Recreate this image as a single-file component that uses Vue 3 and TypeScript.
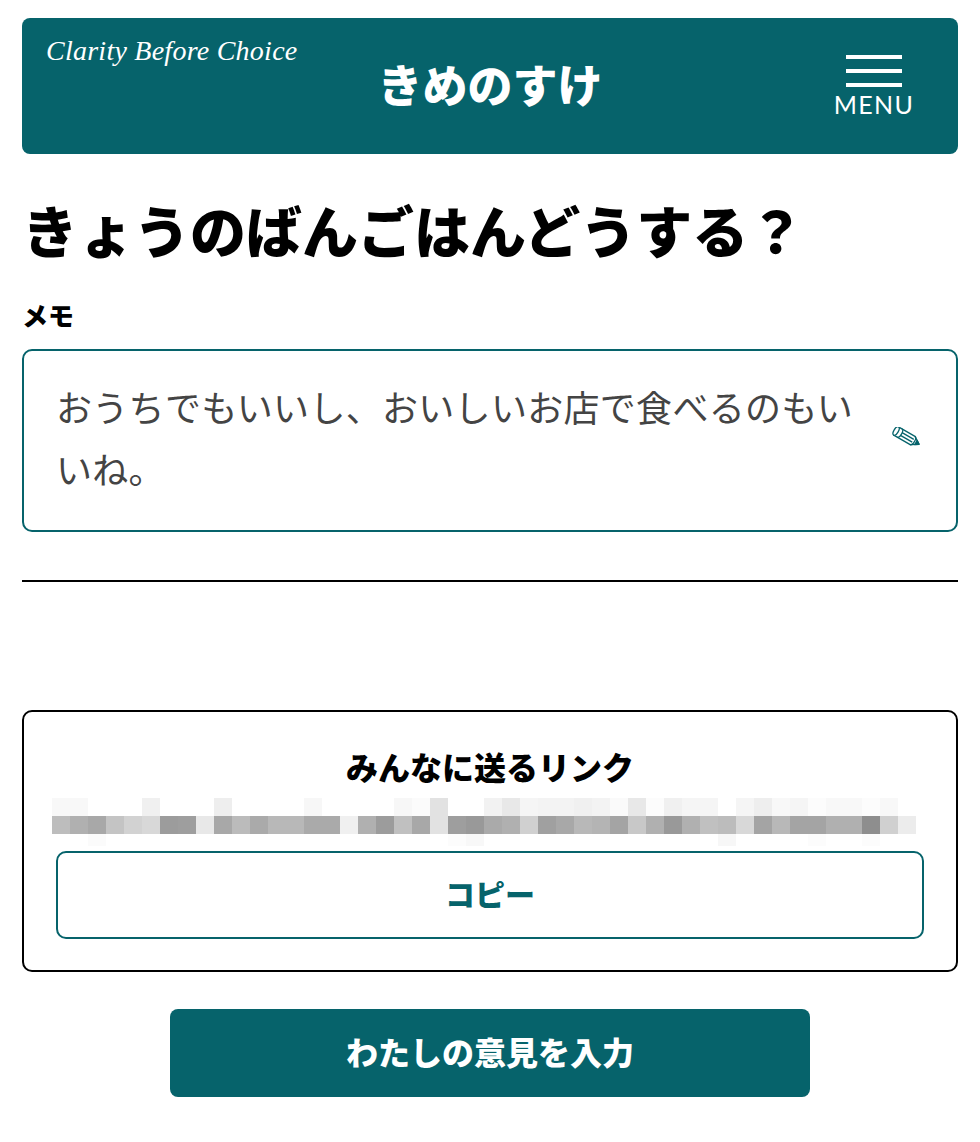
<script setup lang="ts">
const top = ['f8','f8','ff','ff','ff','f0','ff','ff','ff','ee','ff','ff','ff','ff','f7','ff','ff','ff','ff','f7','fb','e2','ff','ff','f2','e8','f5','f3','f3','f0','f3','fa','e8','fc','f0','f5','f5','ff','f5','ee','f8','f5','fc','f8','f8','fc','f8','ff']
const mid = ['bd','b0','a8','c4','d2','d8','9c','9e','e8','a8','bb','aa','b8','b8','aa','aa','f0','b0','9c','c0','a8','e2','9e','99','aa','b0','d0','a0','a8','b8','b4','a4','c8','b0','99','b0','c0','bc','d8','a4','b8','a4','a4','b0','b0','8e','d0','ec']
const low: Record<number, string> = { 2: 'fb', 22: 'fc', 23: 'f8', 37: 'f7', 42: 'fc', 45: 'fc' }
const cell = (v?: string) => ({ background: `#${v ?? 'ff'}${v ?? 'ff'}${v ?? 'ff'}` })
const bottom = mid.map((_, i) => low[i])
</script>

<template>
  <div class="page">
    <header class="head">
      <p class="tag">Clarity Before Choice</p>
      <div class="logo">きめのすけ</div>
      <button class="menu" type="button">
        <span class="bars"><i></i><i></i><i></i></span>
        <span class="menu-text">MENU</span>
      </button>
    </header>

    <h1 class="title">きょうのばんごはんどうする？</h1>
    <div class="label">メモ</div>
    <div class="memo">
      <p class="memo-text">おうちでもいいし、おいしいお店で食べるのもいいね。</p>
      <svg class="pencil" viewBox="0 0 30 20" width="30" height="20" aria-hidden="true">
        <g transform="translate(14.5 10) rotate(30)" fill="#fff" stroke="#06636b" stroke-width="1.3" stroke-linejoin="round">
          <path d="M-12 -4.800 L7 -4.800 L14.500 0 L7 4.800 L-12 4.800Z" />
          <ellipse cx="-12" cy="0" rx="2.200" ry="4.800" />
          <path d="M-8 -4.800A2.200 4.800 0 0 1 -8 4.800M7 -4.800A2.200 4.800 0 0 1 7 4.800M-6 -1.600H7.500M-6 1.600H7.500" fill="none" />
          <path d="M11 -2.400 14.500 0 11 2.400Z" fill="#06636b" />
        </g>
      </svg>
    </div>
    <hr class="rule" />

    <section class="card">
      <h2 class="card-title">みんなに送るリンク</h2>
      <div class="mosaic" aria-hidden="true">
        <div class="row"><span v-for="(v, i) in top" :key="i" :style="cell(v)"></span></div>
        <div class="row"><span v-for="(v, i) in mid" :key="i" :style="cell(v)"></span></div>
        <div class="row short"><span v-for="(v, i) in bottom" :key="i" :style="cell(v)"></span></div>
      </div>
      <button class="copy" type="button">コピー</button>
    </section>

    <button class="primary" type="button">わたしの意見を入力</button>
  </div>
</template>

<style scoped>
.page {
  width: 980px;
  height: 1142px;
  box-sizing: border-box;
  padding: 18px 22px 0;
  display: flex;
  flex-direction: column;
  background: #fff;
  color: #000;
  font-family: "Liberation Sans", "Noto Sans CJK JP", sans-serif;
}
.head {
  height: 136px;
  flex: none;
  background: #06636b;
  border-radius: 8px;
  color: #fff;
  display: grid;
  grid-template-columns: 1fr auto 1fr;
}
.tag {
  margin: 17px 0 0 24px;
  font-family: "Liberation Serif", serif;
  font-style: italic;
  font-size: 28px;
  line-height: 32px;
  letter-spacing: 0.25px;
  white-space: nowrap;
}
.logo {
  align-self: center;
  font-size: 45px;
  font-weight: 900;
  line-height: 60px;
  margin-top: 3px;
}
.menu {
  justify-self: end;
  margin: 37px 46px 0 0;
  padding: 0;
  border: 0;
  background: none;
  color: #fff;
  width: 76px;
  height: 64px;
  display: flex;
  flex-direction: column;
  align-items: center;
}
.bars {
  display: flex;
  flex-direction: column;
  gap: 10px;
  width: 56px;
}
.bars i {
  display: block;
  height: 4px;
  background: #fff;
}
.menu-text {
  font-family: Lato, sans-serif;
  font-size: 25px;
  line-height: 30px;
  letter-spacing: 1.3px;
  margin-top: 2px;
  white-space: nowrap;
}
.title {
  margin: 43px 0 0;
  font-size: 56px;
  font-weight: 900;
  line-height: 74px;
}
.label {
  margin-top: 28px;
  font-size: 26px;
  font-weight: 900;
  line-height: 36px;
}
.memo {
  margin-top: 14px;
  height: 183px;
  flex: none;
  box-sizing: border-box;
  border: 2px solid #06636b;
  border-radius: 10px;
  padding: 28px 34px 0 32px;
  display: flex;
  align-items: flex-start;
  justify-content: space-between;
}
.memo-text {
  margin: 0;
  width: 800px;
  font-size: 36px;
  line-height: 62px;
  letter-spacing: 0.3px;
  color: #444;
}
.pencil {
  flex: none;
  margin-top: 48px;
}
.rule {
  margin: 48px 0 0;
  border: 0;
  height: 2px;
  background: #000;
  flex: none;
}
.card {
  margin-top: 128px;
  height: 262px;
  box-sizing: border-box;
  border: 2px solid #000;
  border-radius: 10px;
  padding: 0 32px;
  flex: none;
}
.card-title {
  margin: 34px 0 0;
  text-align: center;
  font-size: 32px;
  font-weight: 900;
  line-height: 46px;
}
.mosaic {
  margin: 6px 0 0 -4px;
  width: 864px;
  height: 48px;
}
.row {
  display: grid;
  grid-template-columns: repeat(48, 18px);
  height: 18px;
}
.row.short {
  height: 12px;
}
.copy {
  display: block;
  margin-top: 5px;
  width: 100%;
  height: 88px;
  box-sizing: border-box;
  border: 2px solid #06636b;
  border-radius: 10px;
  padding: 0 0 4px;
  background: #fff;
  color: #06636b;
  font: inherit;
  font-size: 30px;
  font-weight: 900;
}
.primary {
  align-self: center;
  margin-top: 37px;
  width: 640px;
  height: 88px;
  flex: none;
  border: 0;
  border-radius: 8px;
  padding: 0 0 5px;
  background: #06636b;
  color: #fff;
  font: inherit;
  font-size: 32px;
  font-weight: 900;
}
</style>

<style>
html, body { margin: 0; background: #fff; }
</style>
